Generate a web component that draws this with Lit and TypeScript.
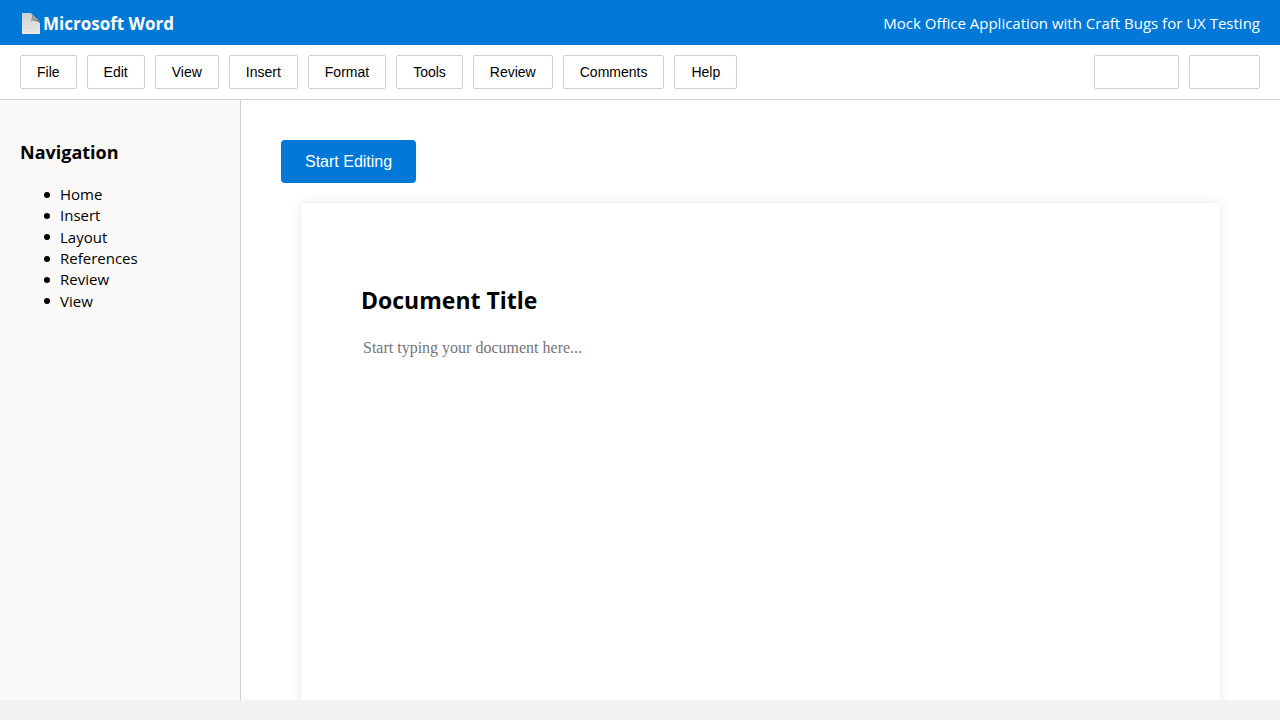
import { LitElement, html, css } from "lit";
import { customElement } from "lit/decorators.js";

const MENUS = ["File", "Edit", "View", "Insert", "Format", "Tools", "Review", "Comments", "Help"];
const SECTIONS = ["Home", "Insert", "Layout", "References", "Review", "View"];

@customElement("app-root")
export class AppRoot extends LitElement {
  static styles = css`
    :host {
      display: flex;
      flex-direction: column;
      height: 100vh;
      color: #000;
      font-family: "Segoe UI", "Open Sans", "Noto Sans", sans-serif;
      font-size: 15px;
      line-height: 21px;
    }
    * {
      box-sizing: border-box;
    }
    .header {
      display: flex;
      align-items: center;
      justify-content: space-between;
      height: 45px;
      padding: 2px 20px 0;
      background: #0078d7;
      color: #fff;
    }
    .brand {
      display: flex;
      align-items: center;
      gap: 2px;
      font-size: 17px;
      font-weight: 700;
    }
    .toolbar {
      display: flex;
      justify-content: space-between;
      padding: 10px 20px;
      border-bottom: 1px solid #d0d0d0;
      background: #fff;
    }
    .group {
      display: flex;
      gap: 10px;
    }
    .tool {
      height: 34px;
      padding: 0 16px;
      border: 1px solid #d0d0d0;
      border-radius: 2px;
      background: #fff;
      color: #000;
      font: 14px "Liberation Sans", Arial, sans-serif;
    }
    .wide {
      width: 85px;
    }
    .narrow {
      width: 71px;
    }
    .body {
      display: flex;
      flex: 1;
      min-height: 0;
    }
    .sidebar {
      flex: none;
      width: 241px;
      padding: 40px 20px;
      border-right: 1px solid #d0d0d0;
      background: #faf9f8;
    }
    .nav-title {
      margin: 0 0 20px;
      font-size: 18px;
      line-height: 24px;
      font-weight: 700;
    }
    .nav-list {
      display: grid;
      height: 128px;
      margin: 0;
      padding: 0 0 0 24px;
      list-style: none;
    }
    .nav-item {
      display: flex;
      align-items: center;
      gap: 10px;
    }
    .nav-item::before {
      content: "";
      width: 6px;
      height: 6px;
      border-radius: 50%;
      background: #000;
    }
    .main {
      flex: 1;
      min-width: 0;
      padding: 40px;
      overflow: auto;
      scrollbar-width: none;
      background: #fff;
    }
    .start {
      display: block;
      height: 43px;
      padding: 0 24px;
      border: 0;
      border-radius: 4px;
      background: #0078d7;
      color: #fff;
      font: 16px "Liberation Sans", Arial, sans-serif;
    }
    .page {
      margin: 20px 20px 0;
      min-height: 800px;
      padding: 80px 60px;
      background: #fff;
      box-shadow: 0 0 10px rgba(0, 0, 0, 0.1);
    }
    .doc-title {
      margin: 0 0 20px;
      font-size: 23px;
      line-height: 34px;
      font-weight: 700;
    }
    .editor {
      display: block;
      width: 100%;
      height: 500px;
      padding: 2px;
      border: 0;
      outline: 0;
      resize: none;
      background: transparent;
      font: 16px "Liberation Serif", "Times New Roman", serif;
    }
    .editor::placeholder {
      color: #757575;
    }
    .status {
      flex: none;
      height: 20px;
      background: #f3f2f1;
    }
  `;

  render() {
    return html`
      <header class="header">
        <div class="brand">
          <svg width="21" height="22" viewBox="0 0 21 22" aria-hidden="true">
            <defs>
              <linearGradient id="sheet" x1="0" y1="0" x2="0" y2="1">
                <stop offset="0" stop-color="#cccccc" />
                <stop offset="1" stop-color="#ececec" />
              </linearGradient>
              <linearGradient id="fold" x1="0" y1="1" x2="1" y2="0">
                <stop offset="0" stop-color="#aaaaaa" />
                <stop offset="0.5" stop-color="#4b5560" />
                <stop offset="1" stop-color="#2c5f8f" />
              </linearGradient>
            </defs>
            <path d="M2 0h9l9 9v12H2z" fill="url(#sheet)" />
            <path d="M11 0c2 2 1 5 0 8 4-1 7 0 9 2V9z" fill="url(#fold)" />
            <path d="M11 0c2 2 2 5 1 7 3-1 6 0 8 2z" fill="#a9adb1" />
            <path d="M4 12h7M4 15h14M4 18h14" stroke="#d8d8d8" fill="none" />
          </svg>
          <span>Microsoft Word</span>
        </div>
        <div>Mock Office Application with Craft Bugs for UX Testing</div>
      </header>
      <div class="toolbar">
        <div class="group">
          ${MENUS.map((name) => html`<button class="tool" type="button">${name}</button>`)}
        </div>
        <div class="group">
          <button class="tool wide" type="button" aria-label="Comments"></button>
          <button class="tool narrow" type="button" aria-label="Share"></button>
        </div>
      </div>
      <div class="body">
        <nav class="sidebar">
          <h3 class="nav-title">Navigation</h3>
          <ul class="nav-list">
            ${SECTIONS.map((name) => html`<li class="nav-item">${name}</li>`)}
          </ul>
        </nav>
        <main class="main">
          <button class="start" type="button">Start Editing</button>
          <article class="page">
            <h2 class="doc-title">Document Title</h2>
            <textarea class="editor" aria-label="Document text" placeholder="Start typing your document here..."></textarea>
          </article>
        </main>
      </div>
      <footer class="status"></footer>
    `;
  }
}
